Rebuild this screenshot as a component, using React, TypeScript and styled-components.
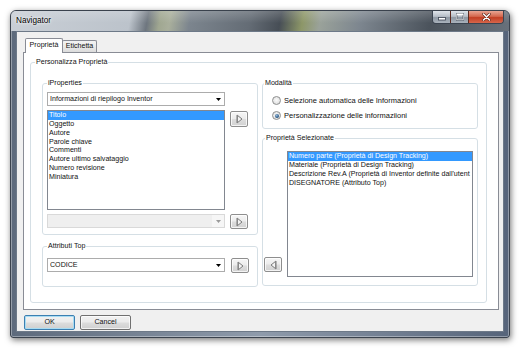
import React from 'react';
import styled, { createGlobalStyle } from 'styled-components';

const GlobalStyle = createGlobalStyle`
  html, body {
    margin: 0;
    padding: 0;
    background: #ffffff;
  }
  body {
    font-family: "Liberation Sans", Arial, sans-serif;
    font-size: 7.1px;
    color: #111;
  }
`;

const Page = styled.div`
  width: 521px;
  height: 349px;
  box-sizing: border-box;
  padding: 10px 0 0 10px;
`;

const Window = styled.div`
  width: 500px;
  height: 328px;
  box-sizing: border-box;
  display: flex;
  flex-direction: column;
  border: 1px solid #3a424d;
  border-radius: 6px 6px 3px 3px;
  background: linear-gradient(90deg, #5d6a7c 0%, #8f9bab 50%, #56647a 100%);
  box-shadow: 1px 2px 6px rgba(0, 0, 0, 0.55), inset 0 0 0 1px rgba(255, 255, 255, 0.35);
  overflow: hidden;
`;

const TitleBar = styled.div`
  height: 20px;
  flex: none;
  display: flex;
  align-items: flex-start;
  padding-left: 5px;
  background:
    linear-gradient(180deg, rgba(255, 255, 255, 0.18) 0%, rgba(255, 255, 255, 0) 60%),
    linear-gradient(100deg, #c9cfd6 0%, #bcc3cb 24%, #6e767f 27.5%, #a0a791 30%, #a9af9c 32%,
      #7c858e 36%, #646c75 48%, #474e56 54%, #8d9768 58.5%, #9aa29a 62%, #7d868f 70%,
      #4b535c 84%, #68717b 100%);
`;

const Title = styled.span`
  font-size: 8.2px;
  line-height: 20px;
  color: #000;
  text-shadow: 0 0 4px #fff, 0 0 2px #fff;
`;

const CaptionButtons = styled.div`
  margin-left: auto;
  margin-right: 5px;
  display: flex;
  height: 12px;
  border: 1px solid #3b4450;
  border-top: none;
  border-radius: 0 0 4px 4px;
  overflow: hidden;
`;

const CaptionButton = styled.div<{ $w: number; $close?: boolean }>`
  width: ${p => p.$w}px;
  height: 100%;
  display: flex;
  align-items: center;
  justify-content: center;
  background: ${p =>
    p.$close
      ? 'linear-gradient(180deg, #e9a593 0%, #d4684e 45%, #c23f24 55%, #d6664b 100%)'
      : 'linear-gradient(180deg, #dfe4ea 0%, #b7bfc8 45%, #8e98a3 55%, #a9b2bc 100%)'};
  & + & {
    border-left: 1px solid ${p => (p.$close ? '#5a2a20' : '#6b7480')};
  }
`;

const FrameBody = styled.div`
  flex: 1;
  padding: 0 5px 5px 5px;
  display: flex;
`;

const Client = styled.div`
  flex: 1;
  box-sizing: border-box;
  border: 1px solid #6d7988;
  background: #f0f0f0;
  padding: 6px 4px 1px 6px;
  display: flex;
  flex-direction: column;
`;

const TabStrip = styled.div`
  display: flex;
  align-items: flex-end;
  height: 15px;
  padding-left: 2px;
  margin-bottom: -1px;
  position: relative;
  z-index: 1;
`;

const Tab = styled.div<{ $active?: boolean; $w: number }>`
  width: ${p => p.$w}px;
  height: ${p => (p.$active ? 15 : 12)}px;
  box-sizing: border-box;
  margin-bottom: ${p => (p.$active ? 0 : 1)}px;
  margin-left: ${p => (p.$active ? 0 : -1)}px;
  border: 1px solid #898c95;
  border-bottom: none;
  border-radius: 2px 2px 0 0;
  background: ${p => (p.$active ? '#ffffff' : 'linear-gradient(180deg, #f3f3f3 0%, #e9e9e9 50%, #dcdcdc 100%)')};
  text-align: center;
  line-height: ${p => (p.$active ? 13 : 11)}px;
  position: relative;
  z-index: ${p => (p.$active ? 2 : 1)};
`;

const TabPanel = styled.div`
  height: 258px;
  box-sizing: border-box;
  border: 1px solid #898c95;
  background: #ffffff;
  padding: 4px 0 0 6px;
`;

const Group = styled.fieldset<{ $pad: string; $w?: number }>`
  margin: 0;
  min-width: 0;
  box-sizing: border-box;
  width: ${p => (p.$w ? `${p.$w}px` : 'auto')};
  border: 1px solid #d5dfe5;
  border-radius: 3px;
  padding: ${p => p.$pad};
`;

const Legend = styled.legend<{ $shift?: number }>`
  padding: 0 1px;
  margin-left: ${p => p.$shift ?? 0}px;
  height: 10px;
  line-height: 10px;
  font-size: 7.1px;
`;

const Columns = styled.div`
  display: grid;
  grid-template-columns: 216px 216px;
  column-gap: 4px;
  align-items: start;
`;

const Column = styled.div<{ $gap: number }>`
  display: flex;
  flex-direction: column;
  gap: ${p => p.$gap}px;
`;

const Stack = styled.div<{ $gap: number }>`
  display: flex;
  flex-direction: column;
  gap: ${p => p.$gap}px;
`;

const Row = styled.div<{ $gap: number; $align?: string }>`
  display: flex;
  gap: ${p => p.$gap}px;
  align-items: ${p => p.$align ?? 'flex-start'};
`;

const Combo = styled.div<{ $disabled?: boolean }>`
  width: 178px;
  height: 14px;
  box-sizing: border-box;
  display: flex;
  align-items: stretch;
  border: 1px solid ${p => (p.$disabled ? '#d9d9d9' : '#acacac')};
  background: ${p => (p.$disabled ? '#efefef' : '#ffffff')};
  padding-left: 2px;
`;

const ComboText = styled.span`
  flex: 1;
  line-height: 12px;
  white-space: nowrap;
  overflow: hidden;
`;

const ComboArrow = styled.span<{ $disabled?: boolean }>`
  width: 12px;
  display: flex;
  align-items: center;
  justify-content: center;
  background: ${p => (p.$disabled ? '#f6f6f6' : 'transparent')};
`;

const ListBox = styled.div<{ $w: number; $h: number }>`
  width: ${p => p.$w}px;
  height: ${p => p.$h}px;
  box-sizing: border-box;
  border: 1px solid #828790;
  background: #ffffff;
  overflow: hidden;
`;

const ListItem = styled.div<{ $selected?: boolean }>`
  height: 8.86px;
  line-height: 8.86px;
  padding-left: 1px;
  white-space: nowrap;
  background: ${p => (p.$selected ? '#3399ff' : 'transparent')};
  color: ${p => (p.$selected ? '#ffffff' : '#111111')};
`;

const ArrowButton = styled.div<{ $h?: number; $mb?: number; $mt?: number }>`
  width: 18px;
  height: ${p => p.$h ?? 16}px;
  flex: none;
  box-sizing: border-box;
  margin-top: ${p => p.$mt ?? 0}px;
  margin-bottom: ${p => p.$mb ?? 0}px;
  border: 1px solid #8e8e8e;
  border-radius: 2px;
  background: linear-gradient(180deg, #f6f6f6 0%, #ececec 48%, #dddddd 52%, #d2d2d2 100%);
  box-shadow: inset 0 0 0 1px rgba(255, 255, 255, 0.75);
  display: flex;
  align-items: center;
  justify-content: center;
`;

const RadioRow = styled.div`
  display: flex;
  align-items: center;
  height: 9px;
  font-size: 7.5px;
  white-space: nowrap;
`;

const Radio = styled.span<{ $checked?: boolean }>`
  width: 9px;
  height: 9px;
  flex: none;
  margin-right: 3px;
  box-sizing: border-box;
  border-radius: 50%;
  border: 1px solid #8e8f8f;
  background: radial-gradient(circle at 50% 45%, #fbfbfb 0%, #e2e2e2 70%, #cfcfcf 100%);
  display: flex;
  align-items: center;
  justify-content: center;
  &::after {
    content: '';
    width: 4px;
    height: 4px;
    border-radius: 50%;
    background: ${p => (p.$checked ? 'radial-gradient(circle at 40% 35%, #9ab9d6 0%, #2c5d8c 60%, #1b3f66 100%)' : 'transparent')};
  }
`;

const ButtonRow = styled.div`
  display: flex;
  gap: 5px;
  margin-top: 5px;
  padding-left: 1px;
`;

const DialogButton = styled.div<{ $default?: boolean }>`
  width: 51px;
  height: 15px;
  box-sizing: border-box;
  border-radius: 2px;
  border: 1px solid ${p => (p.$default ? '#3c7fb1' : '#707070')};
  background: linear-gradient(180deg, #f2f2f2 0%, #ebebeb 48%, #dddddd 52%, #cfcfcf 100%);
  box-shadow: inset 0 0 0 1px ${p => (p.$default ? '#a8dcf3' : 'rgba(255, 255, 255, 0.7)')};
  text-align: center;
  line-height: 13px;
`;

const DropTriangle = ({ color = '#000' }: { color?: string }) => (
  <svg width="5" height="3" viewBox="0 0 5 3">
    <polygon points="0,0 5,0 2.5,3" fill={color} />
  </svg>
);

const PlayIcon = ({ left }: { left?: boolean }) => (
  <svg width="7" height="10" viewBox="0 0 7 10" style={left ? { transform: 'scaleX(-1)' } : undefined}>
    <polygon points="1,1 6,5 1,9" fill="#f3f3f3" stroke="#7b7b7b" strokeWidth="1" strokeLinejoin="round" />
    <line x1="1.5" y1="1.5" x2="1.5" y2="8.5" stroke="#8a8a8a" strokeWidth="1" />
  </svg>
);

const MinGlyph = () => (
  <svg width="8" height="8" viewBox="0 0 8 8">
    <rect x="0.5" y="4.5" width="7" height="2.5" fill="#fff" stroke="#3a4250" strokeWidth="0.8" />
  </svg>
);

const MaxGlyph = () => (
  <svg width="8" height="8" viewBox="0 0 8 8">
    <rect x="0.8" y="0.8" width="6.4" height="6" fill="none" stroke="#3a4250" strokeWidth="1.6" />
    <rect x="0.8" y="0.8" width="6.4" height="6" fill="none" stroke="#fff" strokeWidth="0.8" />
    <rect x="1" y="1" width="6" height="1.3" fill="#fff" />
  </svg>
);

const CloseGlyph = () => (
  <svg width="9" height="8" viewBox="0 0 9 8">
    <path d="M1.5 1 L7.5 7 M7.5 1 L1.5 7" stroke="#5a2418" strokeWidth="2.6" strokeLinecap="round" />
    <path d="M1.5 1 L7.5 7 M7.5 1 L1.5 7" stroke="#ffffff" strokeWidth="1.5" strokeLinecap="round" />
  </svg>
);

const iProperties = [
  'Titolo',
  'Oggetto',
  'Autore',
  'Parole chiave',
  'Commenti',
  'Autore ultimo salvataggio',
  'Numero revisione',
  'Miniatura',
];

const selected = [
  'Numero parte (Proprietà di Design Tracking)',
  'Materiale (Proprietà di Design Tracking)',
  "Descrizione Rev.A (Proprietà di Inventor definite dall'utent",
  'DISEGNATORE (Attributo Top)',
];

const App = () => {
  return (
    <Page>
      <GlobalStyle />
      <Window>
        <TitleBar>
          <Title>Navigator</Title>
          <CaptionButtons>
            <CaptionButton $w={17}>
              <MinGlyph />
            </CaptionButton>
            <CaptionButton $w={17}>
              <MaxGlyph />
            </CaptionButton>
            <CaptionButton $w={34} $close>
              <CloseGlyph />
            </CaptionButton>
          </CaptionButtons>
        </TitleBar>
        <FrameBody>
          <Client>
            <TabStrip>
              <Tab $active $w={38}>Proprietà</Tab>
              <Tab $w={35}>Etichetta</Tab>
            </TabStrip>
            <TabPanel>
              <Group $w={457} $pad="11px 8px 15px 11px">
                <Legend $shift={-7}>Personalizza Proprietà</Legend>
                <Columns>
                  <Column $gap={6}>
                    <Group $pad="4px 0 5px 4px">
                      <Legend>iProperties</Legend>
                      <Stack $gap={4}>
                        <Combo>
                          <ComboText>Informazioni di riepilogo Inventor</ComboText>
                          <ComboArrow>
                            <DropTriangle />
                          </ComboArrow>
                        </Combo>
                        <Row $gap={5}>
                          <ListBox $w={178} $h={100}>
                            {iProperties.map((item, idx) => (
                              <ListItem key={item} $selected={idx === 0}>
                                {item}
                              </ListItem>
                            ))}
                          </ListBox>
                          <ArrowButton $mt={1}>
                            <PlayIcon />
                          </ArrowButton>
                        </Row>
                        <Row $gap={5}>
                          <Combo $disabled>
                            <ComboText />
                            <ComboArrow $disabled>
                              <DropTriangle color="#9a9a9a" />
                            </ComboArrow>
                          </Combo>
                          <ArrowButton $h={15}>
                            <PlayIcon />
                          </ArrowButton>
                        </Row>
                      </Stack>
                    </Group>
                    <Group $pad="7px 0 13px 4px">
                      <Legend>Attributi Top</Legend>
                      <Row $gap={6}>
                        <Combo>
                          <ComboText>CODICE</ComboText>
                          <ComboArrow>
                            <DropTriangle />
                          </ComboArrow>
                        </Combo>
                        <ArrowButton $h={15}>
                          <PlayIcon />
                        </ArrowButton>
                      </Row>
                    </Group>
                  </Column>
                  <Column $gap={4}>
                    <Group $pad="8px 4px 8px 9px">
                      <Legend $shift={-8}>Modalità</Legend>
                      <Stack $gap={6}>
                        <RadioRow>
                          <Radio />
                          Selezione automatica delle Informazioni
                        </RadioRow>
                        <RadioRow>
                          <Radio $checked />
                          Personalizzazione delle informaziioni
                        </RadioRow>
                      </Stack>
                    </Group>
                    <Group $pad="8px 4px 8px 1px">
                      <Legend $shift={1}>Proprietà Selezionate</Legend>
                      <Row $gap={5} $align="flex-end">
                        <ArrowButton $h={15} $mb={5}>
                          <PlayIcon left />
                        </ArrowButton>
                        <ListBox $w={186} $h={126}>
                          {selected.map((item, idx) => (
                            <ListItem key={item} $selected={idx === 0}>
                              {item}
                            </ListItem>
                          ))}
                        </ListBox>
                      </Row>
                    </Group>
                  </Column>
                </Columns>
              </Group>
            </TabPanel>
            <ButtonRow>
              <DialogButton $default>OK</DialogButton>
              <DialogButton>Cancel</DialogButton>
            </ButtonRow>
          </Client>
        </FrameBody>
      </Window>
    </Page>
  );
};

export default App;
